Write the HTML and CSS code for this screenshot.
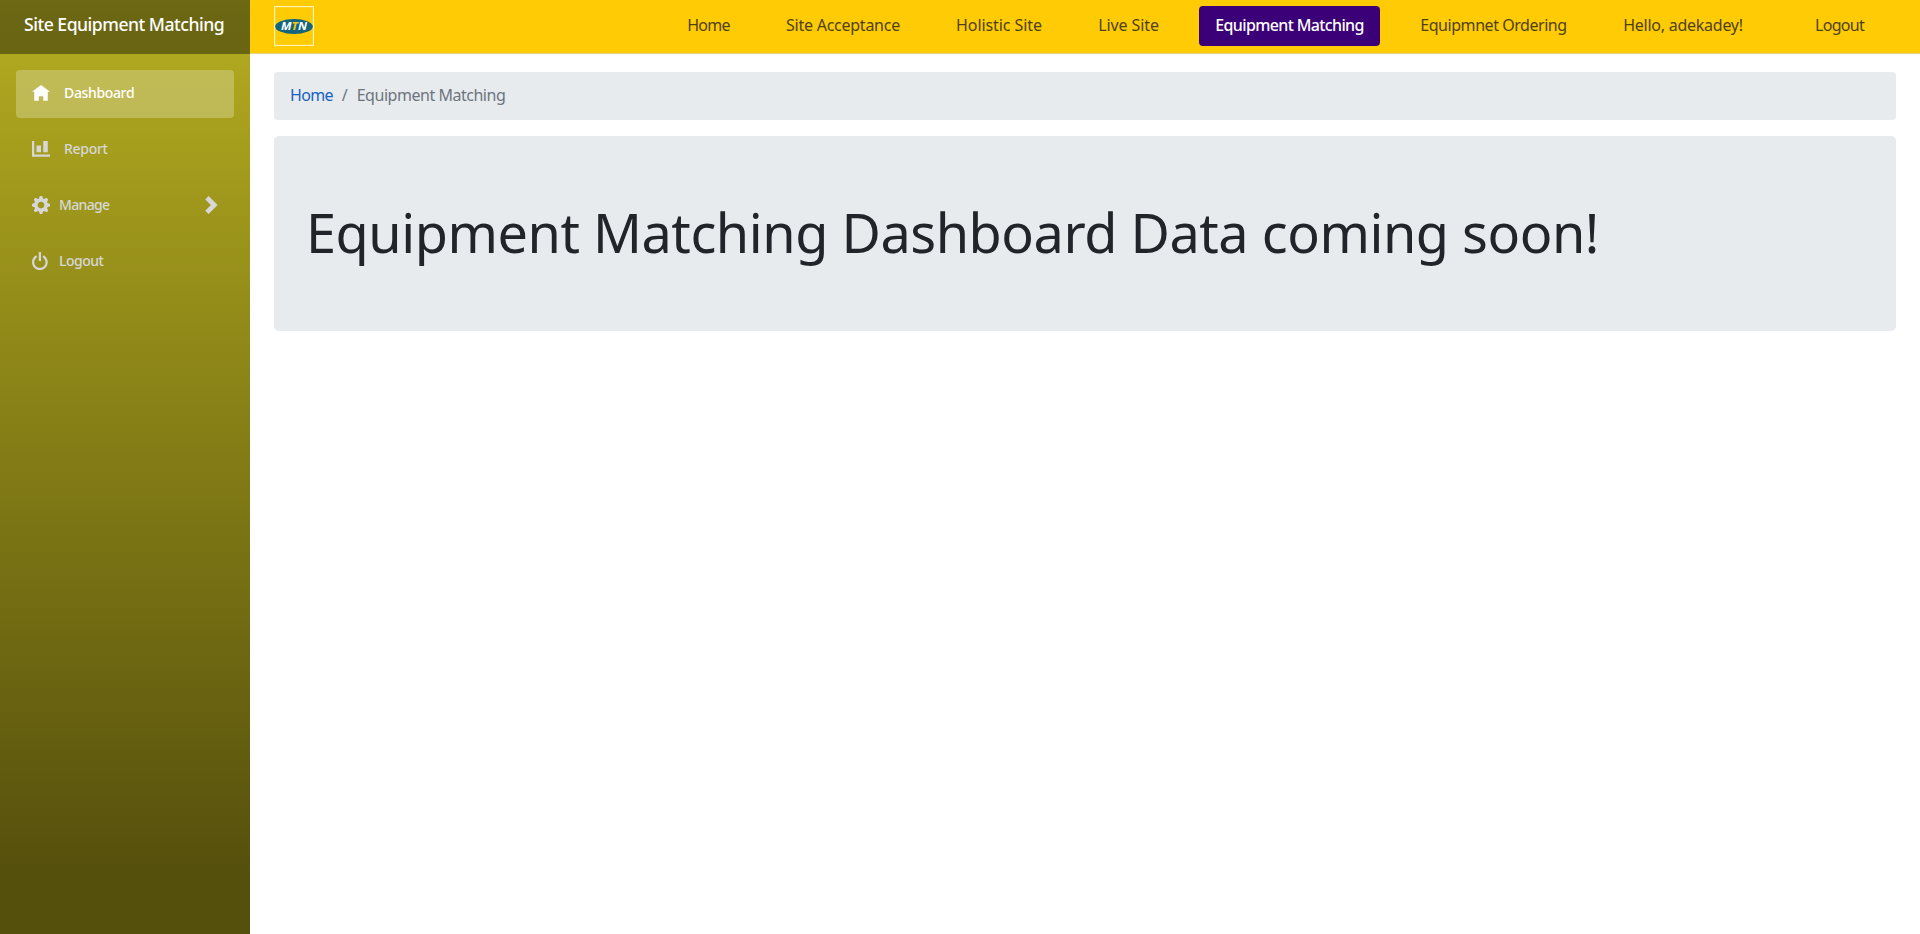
FILE: index.html
```html
<!DOCTYPE html>
<html lang="en">
<head>
<meta charset="utf-8">
<title>Site Equipment Matching</title>
<link rel="stylesheet" href="styles.css">
</head>
<body>
<div class="app">
  <aside class="sidebar">
    <div class="brand"><a>Site Equipment Matching</a></div>
    <nav class="menu">
      <a class="menu-item active"><svg class="icon" viewBox="0 0 8 8"><path d="M4 0l-4 3h1v4h2v-2h2v2h2v-4.030l1 .03-4-3z"/></svg><span class="menu-label wide t-dashboard">Dashboard</span></a>
      <a class="menu-item"><svg class="icon" viewBox="0 0 8 8"><path d="M0 0v7h8v-1h-7v-6h-1zm5 0v5h2v-5h-2zm-3 2v3h2v-3h-2z"/></svg><span class="menu-label wide t-report">Report</span></a>
      <a class="menu-item"><svg class="icon raised" viewBox="0 0 8 8"><path d="M3.500 0l-.5 1.190-.31.130-1.190-.5-.69.690.5 1.190-.13.310-1.190.5v1l1.190.5.130.310-.5 1.190.690.690 1.190-.5.310.130.5 1.190h1l.5-1.190.310-.130 1.190.5.690-.690-.5-1.190.130-.310 1.190-.5v-1l-1.190-.5-.130-.310.5-1.190-.690-.690-1.190.5-.310-.130-.5-1.190h-1zm.5 2.500c.830 0 1.500.670 1.500 1.500s-.670 1.500-1.500 1.500-1.500-.670-1.500-1.500.670-1.500 1.500-1.500z"/></svg><span class="menu-label t-manage">Manage</span><svg class="icon raised chevron" viewBox="0 0 8 8"><path d="M2.500 0l-1.500 1.500 2.500 2.500-2.500 2.500 1.500 1.500 4-4-4-4z"/></svg></a>
      <a class="menu-item"><svg class="icon raised" viewBox="0 0 8 8"><path d="M3 0v4h1v-4h-1zm-1.280 1.440l-.380.310c-.810.640-1.340 1.640-1.340 2.750 0 1.930 1.570 3.500 3.500 3.500s3.500-1.570 3.500-3.500c0-1.110-.530-2.110-1.340-2.750l-.380-.310-.630.780.380.310c.580.460.970 1.170.970 1.970 0 1.390-1.110 2.500-2.500 2.500s-2.500-1.110-2.500-2.500c0-.800.360-1.510.940-1.970l.410-.310-.630-.780z"/></svg><span class="menu-label t-signout">Logout</span></a>
    </nav>
  </aside>
  <div class="main">
    <header class="topbar">
      <svg class="logo" viewBox="0 0 40 40">
        <rect class="logo-frame" x=".5" y=".5" width="39" height="39"/>
        <ellipse class="logo-oval" cx="20" cy="20.500" rx="18.800" ry="7.500"/>
        <text class="logo-text" x="7" y="24.200" textLength="26" lengthAdjust="spacingAndGlyphs">M<tspan class="logo-t">T</tspan>N</text>
      </svg>
      <nav class="links">
        <a class="link w-home">Home</a>
        <a class="link w-acceptance">Site Acceptance</a>
        <a class="link w-holistic">Holistic Site</a>
        <a class="link w-live">Live Site</a>
        <a class="link current w-matching">Equipment Matching</a>
        <a class="link w-ordering">Equipmnet Ordering</a>
        <a class="link w-hello">Hello, adekadey!</a>
        <a class="link w-logout">Logout</a>
      </nav>
    </header>
    <main class="content">
      <nav class="breadcrumb"><a class="crumb-home">Home</a><span class="slash">/</span><span class="crumb-page">Equipment Matching</span></nav>
      <section class="jumbotron"><h1 class="headline">Equipment Matching Dashboard Data coming soon!</h1></section>
    </main>
  </div>
</div>
</body>
</html>
```
FILE: styles.css
```css
* { box-sizing: border-box; }
body {
  margin: 0;
  font: 16px/24px "Noto Sans", sans-serif;
  color: #212529;
  background: #fff;
}
.app { display: flex; height: 934px; overflow: hidden; }
.sidebar {
  flex: 0 0 250px;
  background: linear-gradient(180deg, #b5ad20 0, #56500d 870px);
}
.brand {
  height: 54px;
  padding: 12px 0 0 24px;
  background: rgba(0, 0, 0, .4);
  color: #fff;
  font-size: 17.6px;
  font-weight: 500;
  white-space: nowrap;
  letter-spacing: -.5px;
}
.menu { display: flex; flex-direction: column; gap: 8px; padding: 16px; }
.menu-item {
  display: flex;
  align-items: center;
  height: 48px;
  padding: 0 16px;
  border-radius: 4px;
  color: #d7d7d7;
  font-size: 14px;
}
.menu-item.active { background: rgba(255, 255, 255, .25); color: #fff; font-weight: 500; }
.icon { width: 18px; height: 18px; fill: currentColor; flex: none; }
.raised { margin-bottom: 3px; }
.menu-label { margin-left: 9px; padding-bottom: 2px; white-space: nowrap; font-weight: 500; }
.menu-label.wide { margin-left: 14px; }
.t-dashboard { letter-spacing: -.35px; }
.t-report { letter-spacing: -.3px; }
.t-manage { letter-spacing: -.65px; }
.t-signout { letter-spacing: -.5px; }
.chevron { margin-left: auto; margin-right: -3px; }
.main { flex: 1; min-width: 0; }
.topbar {
  display: flex;
  justify-content: space-between;
  align-items: flex-start;
  height: 54px;
  padding: 6px 40px 0 24px;
  background: #ffcb05;
  border-bottom: 1px solid #e5d385;
}
.logo { width: 40px; height: 40px; }
.logo-frame { fill: none; stroke: #fff3b8; stroke-width: 1.3; }
.logo-oval { fill: #12657c; }
.logo-text { font: italic 700 10px "Noto Sans", sans-serif; fill: #fff; }
.logo-t { fill: #f5c518; }
.links { display: flex; gap: 24px; }
.link {
  height: 40px;
  padding-top: 7px;
  text-align: center;
  white-space: nowrap;
  border-radius: 4px;
  color: #4f4114;
}
.current { background: #3b0078; color: #fff; font-weight: 500; }
.w-home { width: 75px; letter-spacing: -.7px; }
.w-acceptance { width: 146px; letter-spacing: -.25px; }
.w-holistic { width: 118px; letter-spacing: -.07px; }
.w-live { width: 93px; letter-spacing: -.1px; }
.w-matching { width: 181px; letter-spacing: -.63px; }
.w-ordering { width: 179px; letter-spacing: -.45px; }
.w-hello { width: 152px; letter-spacing: -.25px; }
.w-logout { width: 81px; margin-left: 16px; letter-spacing: -.7px; }
.content { padding: 18px 24px 0; }
.breadcrumb {
  display: flex;
  gap: 9px;
  height: 48px;
  padding: 11px 16px;
  margin-bottom: 16px;
  border-radius: 4px;
  background: #e7ebee;
  color: #6c757d;
}
.crumb-home { color: #1861c4; letter-spacing: -.7px; }
.crumb-page { letter-spacing: -.47px; }
.jumbotron {
  height: 195px;
  padding: 63px 32px;
  border-radius: 5px;
  background: #e7ebee;
}
.headline { margin: 0; font-size: 54px; line-height: 67px; font-weight: 400; white-space: nowrap; letter-spacing: -.46px; }
```
